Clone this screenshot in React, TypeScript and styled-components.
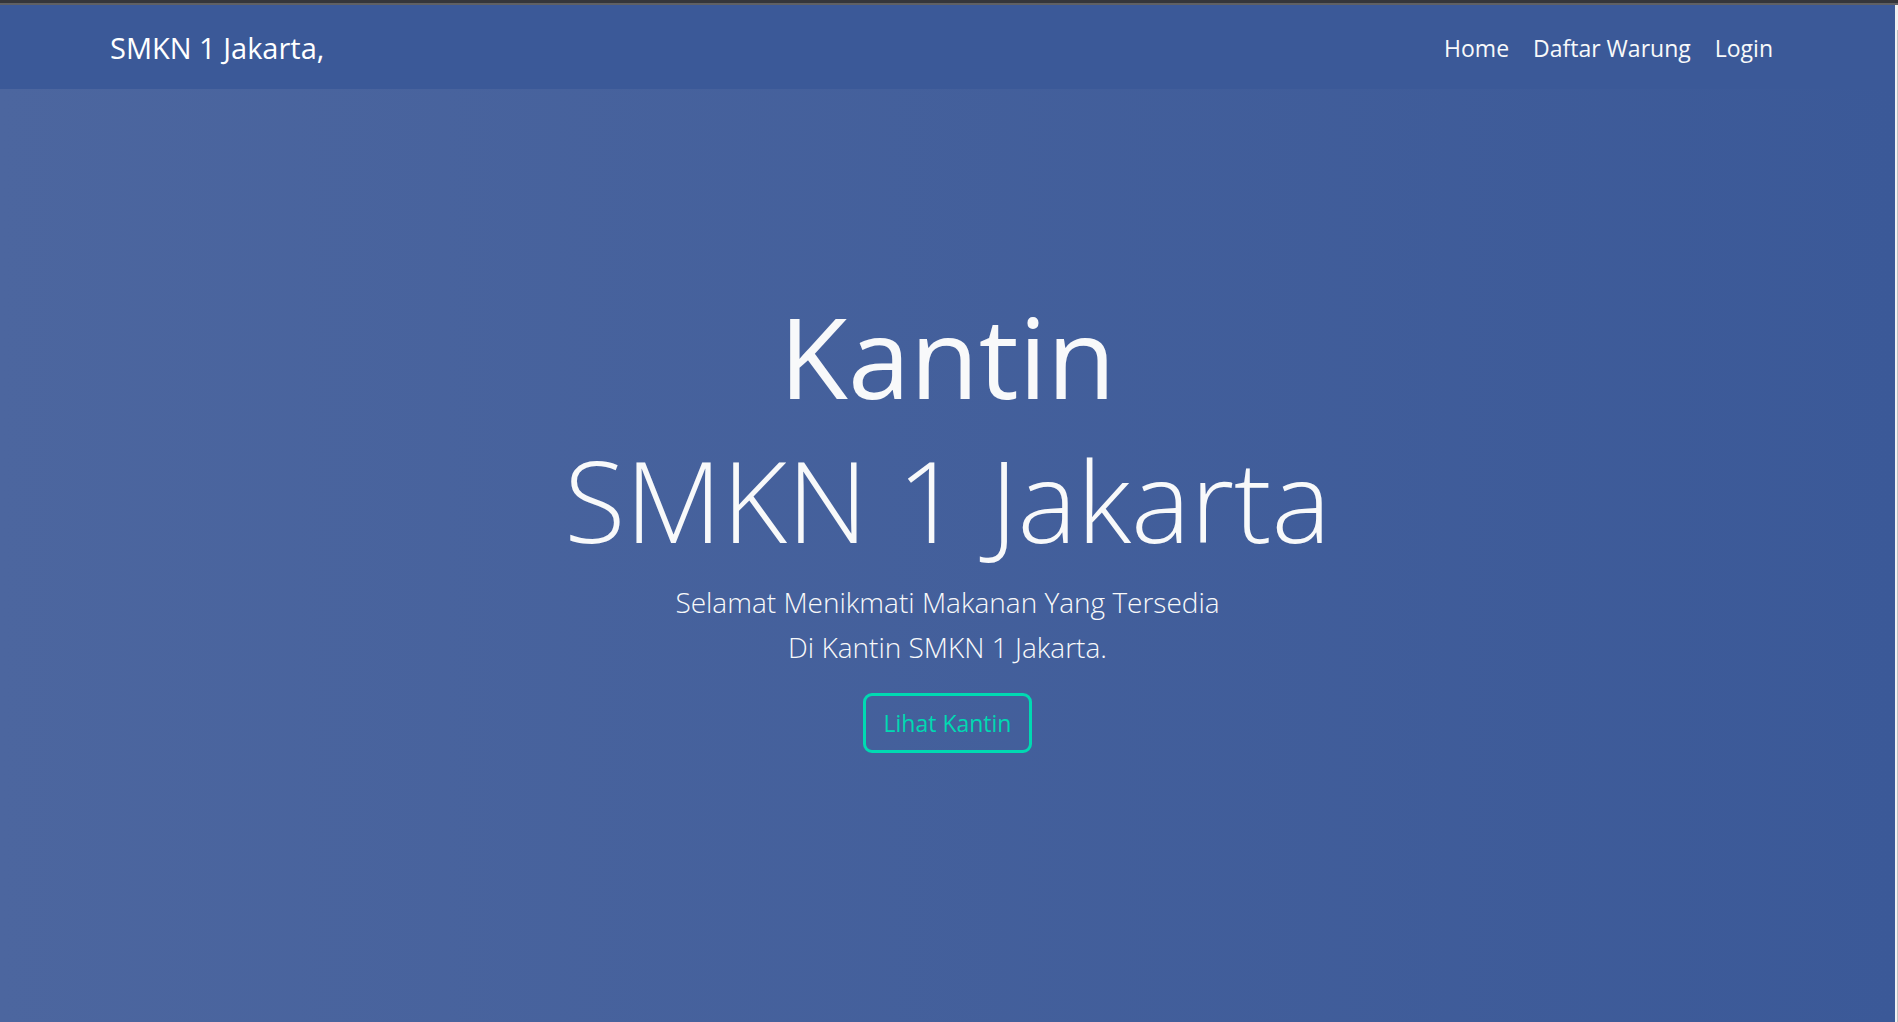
import React from "react";
import styled, { createGlobalStyle } from "styled-components";

const Global = createGlobalStyle`
  *, *::before, *::after { box-sizing: border-box; }
  body {
    margin: 0;
    background: #3b5998;
    font-family: "Segoe UI", "Open Sans", "Noto Sans", sans-serif;
    color: #f8f9fa;
  }
`;

const Page = styled.div`
  display: flex;
  flex-direction: column;
  min-height: 100vh;
`;

const TopEdge = styled.div`
  height: 5px;
  background: #35363a;
  border-bottom: 2px solid #5f6063;
`;

const Body = styled.div`
  flex: 1;
  display: flex;
`;

const Content = styled.div`
  flex: 1;
  display: flex;
  flex-direction: column;
`;

const ScrollTrack = styled.div`
  display: flex;
  width: 3px;
  padding: 25px 0 0 2px;
  background: #f1f1f1;
`;

const ScrollThumb = styled.div`
  flex: 1;
  background: #c1c1c1;
`;

const Navbar = styled.nav`
  display: flex;
  align-items: center;
  justify-content: space-between;
  height: 84px;
  padding: 2px 122px 0 110px;
  background: #3b5998;
`;

const Brand = styled.a`
  font-size: 29px;
  line-height: 44px;
  color: #ffffff;
  text-decoration: none;
`;

const NavList = styled.ul`
  display: flex;
  gap: 24px;
  margin: 0;
  padding: 0;
  list-style: none;
`;

const NavLink = styled.a`
  font-size: 23px;
  line-height: 36px;
  color: #f8f9fa;
  text-decoration: none;
`;

const Hero = styled.main`
  flex: 1;
  display: flex;
  flex-direction: column;
  align-items: center;
  justify-content: center;
  padding-bottom: 74px;
  text-align: center;
  background: linear-gradient(to right, #4c669f, #3b5998);
`;

const Title = styled.h1<{ $weight: number }>`
  margin: 0;
  font-size: 112px;
  font-weight: ${(p) => p.$weight};
  line-height: 144px;
`;

const Lead = styled.p`
  margin: 8px 0 23px;
  font-size: 28px;
  font-weight: 300;
  line-height: 45px;
`;

const OutlineButton = styled.button`
  height: 60px;
  padding: 0 18px;
  border: 3px solid #00d9b2;
  border-radius: 9px;
  background: transparent;
  color: #00d9b2;
  font-family: inherit;
  font-size: 23px;
  line-height: 36px;
  cursor: pointer;
`;

const links = ["Home", "Daftar Warung", "Login"];

export default function App() {
  return (
    <Page>
      <Global />
      <TopEdge />
      <Body>
        <Content>
          <Navbar>
            <Brand href="#">SMKN 1 Jakarta,</Brand>
            <NavList>
              {links.map((label) => (
                <li key={label}>
                  <NavLink href="#">{label}</NavLink>
                </li>
              ))}
            </NavList>
          </Navbar>
          <Hero>
            <Title as="h1" $weight={500}>Kantin</Title>
            <Title as="h2" $weight={300}>SMKN 1 Jakarta</Title>
            <Lead>
              Selamat Menikmati Makanan Yang Tersedia
              <br />
              Di Kantin SMKN 1 Jakarta.
            </Lead>
            <OutlineButton type="button">Lihat Kantin</OutlineButton>
          </Hero>
        </Content>
        <ScrollTrack>
          <ScrollThumb />
        </ScrollTrack>
      </Body>
    </Page>
  );
}
